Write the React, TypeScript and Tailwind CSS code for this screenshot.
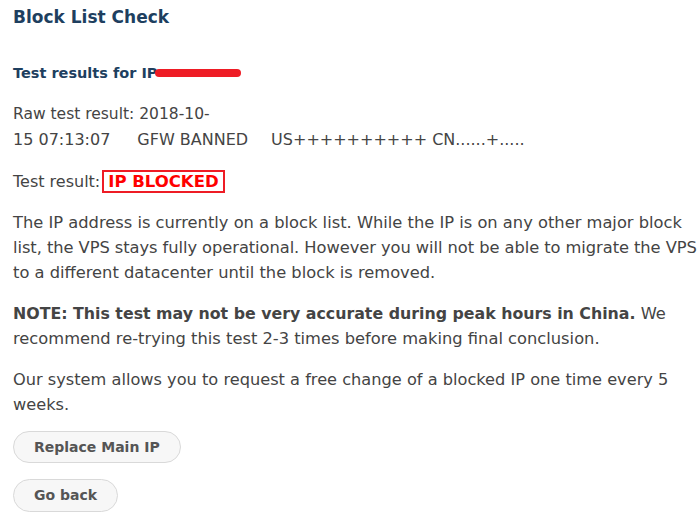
export default function App() {
  return (
    <div className="w-[700px] h-[524px] overflow-hidden bg-white px-[13px] pt-[5px] text-[#444] font-['DejaVu_Sans',sans-serif]">
      <h1 className="text-[17px] font-bold leading-[24px] text-[#1e3f5f]">Block List Check</h1>

      <h3 className="mt-[35px] text-[14.5px] font-bold leading-[18px] text-[#1e3f5f] flex items-center">
        Test results for IP
        <span className="-ml-[2px] inline-block w-[86px] h-[8px] rounded-full bg-[#ee1c25]" />
      </h3>

      <div className="mt-[19px] text-[15.5px] leading-[26px]">
        <div>Raw test result: 2018-10-</div>
        <div className="flex text-[16px]">
          <span>15 07:13:07</span>
          <span className="ml-[27px]">GFW BANNED</span>
          <span className="ml-[23px]">US++++++++++ CN......+.....</span>
        </div>
      </div>

      <p className="mt-[16px] text-[16px] leading-[26px]">
        Test result:
        <span className="ml-[2px] border-2 border-[#ee1c25] px-[4px] font-bold text-[#ff0000] text-[16.5px]">IP BLOCKED</span>
      </p>

      <div className="text-[16.3px] leading-[25px] whitespace-nowrap">
        <div className="mt-[15px]">
          <div>The IP address is currently on a block list. While the IP is on any other major block</div>
          <div className="tracking-[-0.06px]">list, the VPS stays fully operational. However you will not be able to migrate the VPS</div>
          <div>to a different datacenter until the block is removed.</div>
        </div>
        <div className="mt-[16px]">
          <div>
            <b className="text-[15.8px]">NOTE: This test may not be very accurate during peak hours in China.</b> We
          </div>
          <div>recommend re-trying this test 2-3 times before making final conclusion.</div>
        </div>
      </div>

      <div className="mt-[16px] text-[16.2px] leading-[25px]">
        <div>Our system allows you to request a free change of a blocked IP one time every 5</div>
        <div>weeks.</div>
      </div>

      <div className="mt-[14px] flex flex-col items-start gap-[16px]">
        <button className="h-[32px] px-[20px] rounded-full border border-[#d9d9d9] bg-[#f7f7f7] text-[14px] font-bold text-[#555]">
          Replace Main IP
        </button>
        <button className="h-[33px] px-[20px] rounded-full border border-[#d9d9d9] bg-[#f7f7f7] text-[14px] font-bold text-[#555]">
          Go back
        </button>
      </div>
    </div>
  );
}
